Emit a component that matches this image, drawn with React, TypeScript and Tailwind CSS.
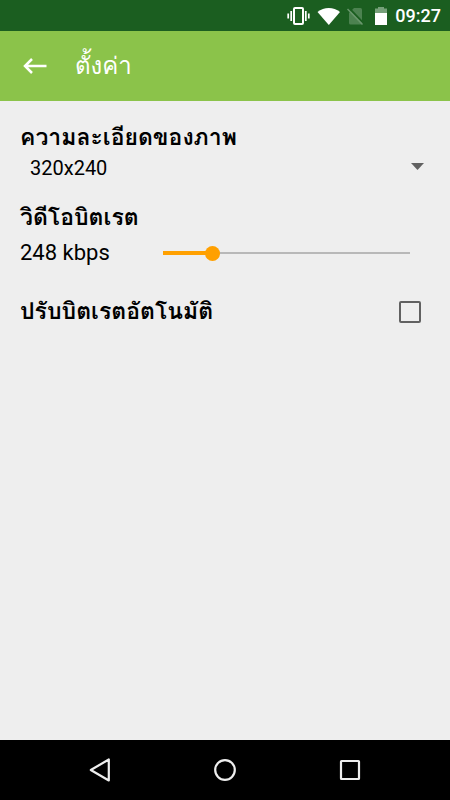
import React, { useState } from 'react';

const MIN_BITRATE = 64;
const MAX_BITRATE = 1088;

function StatusBar() {
  return (
    <div className="flex h-[31px] items-center justify-end bg-[#1b5e20] pr-[9px] text-white">
      <svg className="mr-[6px] h-5 w-6" viewBox="0 0 24 20" fill="none" stroke="currentColor" strokeWidth="2">
        <rect x="7" y="2" width="9" height="16" rx="1" />
        <path d="M4.200 5v10M18.800 5v10M1.200 7.500v5M21.800 7.500v5" strokeWidth="1.700" />
      </svg>
      <svg className="mr-[6px] h-5 w-6" viewBox="0 0 24 20" fill="currentColor">
        <path d="M.5 6C7 .8 16.500.8 23 6L11.800 19z" />
      </svg>
      <svg className="mr-[10px] h-5 w-[17px]" viewBox="0 0 17 20">
        <path d="M7 2h6.500q1.500 0 1.500 1.500V17q0 1.500-1.500 1.500H3.500Q2 18.500 2 17V7z" fill="#4c8250" />
        <path d="M1.500 1.500l15 15.500" stroke="#1b5e20" strokeWidth="1.800" />
        <path d="M.5 3l15 15.500" stroke="#6a976d" strokeWidth="1.500" />
      </svg>
      <svg className="mr-[7px] h-5 w-[14px]" viewBox="0 0 14 20">
        <path d="M1 2.500h3V1h6v1.500h3V7H1z" fill="#76a079" />
        <path d="M1 7h12v12H1z" fill="currentColor" />
      </svg>
      <span className="text-[18px] leading-5 font-medium">09:27</span>
    </div>
  );
}

function AppBar() {
  return (
    <header className="flex h-[70px] items-center bg-[#8bc34a] pl-[23px] text-white">
      <button type="button" aria-label="กลับ" className="mr-7">
        <svg className="h-6 w-6" viewBox="0 0 24 24" fill="none" stroke="currentColor" strokeWidth="2.500">
          <path d="M23.500 12H2.500M9 5l-7 7 7 7" />
        </svg>
      </button>
      <h1 className="text-[24px] leading-8">ตั้งค่า</h1>
    </header>
  );
}

function NavBar() {
  return (
    <nav className="flex h-[60px] items-center justify-center gap-[101px] bg-black text-[#eee]">
      <button type="button" aria-label="Back">
        <svg className="h-6 w-6" viewBox="0 0 24 24" fill="none" stroke="currentColor" strokeWidth="2.200">
          <path d="M20.800 1.500v21L2.800 12z" strokeLinejoin="round" />
        </svg>
      </button>
      <button type="button" aria-label="Home">
        <svg className="h-6 w-6" viewBox="0 0 24 24" fill="none" stroke="currentColor" strokeWidth="2.200">
          <circle cx="12" cy="12" r="9.800" />
        </svg>
      </button>
      <button type="button" aria-label="Recent apps">
        <svg className="h-6 w-6" viewBox="0 0 24 24" fill="none" stroke="currentColor" strokeWidth="2.200">
          <rect x="3" y="3" width="18" height="18" rx="0.500" />
        </svg>
      </button>
    </nav>
  );
}

function App() {
  const [resolution, setResolution] = useState('320x240');
  const [bitrate, setBitrate] = useState(248);
  const [autoBitrate, setAutoBitrate] = useState(false);

  const filled = ((bitrate - MIN_BITRATE) / (MAX_BITRATE - MIN_BITRATE)) * 100;

  return (
    <div className="flex min-h-screen flex-col bg-[#eee] font-['Roboto','Loma','Noto_Sans_Thai_Looped','Noto_Sans_Thai','Noto_Sans',sans-serif] text-black">
      <StatusBar />
      <AppBar />

      <main className="flex-1 px-5 pt-[21px]">
        <section className="mb-5">
          <label htmlFor="resolution" className="block text-[23px] leading-8 font-bold">
            ความละเอียดของภาพ
          </label>
          <div className="relative">
            <select
              id="resolution"
              value={resolution}
              onChange={(e) => setResolution(e.target.value)}
              className="block h-7 w-full appearance-none bg-transparent pl-[10px] text-[20px] leading-7 outline-none"
            >
              <option value="320x240">320x240</option>
              <option value="640x480">640x480</option>
              <option value="1280x720">1280x720</option>
            </select>
            <svg className="pointer-events-none absolute top-[9px] right-[6px] h-[7px] w-[13px]" viewBox="0 0 13 7">
              <path d="M0 0h13L6.500 7z" fill="#616161" />
            </svg>
          </div>
        </section>

        <section className="mb-6">
          <label htmlFor="bitrate" className="block text-[23px] leading-8 font-bold">
            วิดีโอบิตเรต
          </label>
          <div className="flex h-[38px] items-center pr-5">
            <span className="w-[143px] text-[22px] leading-8">{bitrate} kbps</span>
            <input
              id="bitrate"
              type="range"
              min={MIN_BITRATE}
              max={MAX_BITRATE}
              value={bitrate}
              onChange={(e) => setBitrate(Number(e.target.value))}
              style={{ backgroundSize: `${filled}% 4px, 100% 2px` }}
              className="h-4 min-w-0 flex-1 appearance-none bg-transparent bg-[linear-gradient(#ffa000,#ffa000),linear-gradient(#b8b8b8,#b8b8b8)] bg-left bg-no-repeat outline-none [&::-webkit-slider-thumb]:h-[15px] [&::-webkit-slider-thumb]:w-[15px] [&::-webkit-slider-thumb]:appearance-none [&::-webkit-slider-thumb]:rounded-full [&::-webkit-slider-thumb]:bg-[#ffa000]"
            />
          </div>
        </section>

        <section className="flex items-center justify-between pr-[9px]">
          <label htmlFor="auto-bitrate" className="text-[23px] leading-8 font-bold">
            ปรับบิตเรตอัตโนมัติ
          </label>
          <input
            id="auto-bitrate"
            type="checkbox"
            checked={autoBitrate}
            onChange={(e) => setAutoBitrate(e.target.checked)}
            className="h-[22px] w-[22px] appearance-none rounded-xs border-2 border-[#616161] checked:border-[#ffa000] checked:bg-[#ffa000]"
          />
        </section>
      </main>

      <NavBar />
    </div>
  );
}

export default App;
